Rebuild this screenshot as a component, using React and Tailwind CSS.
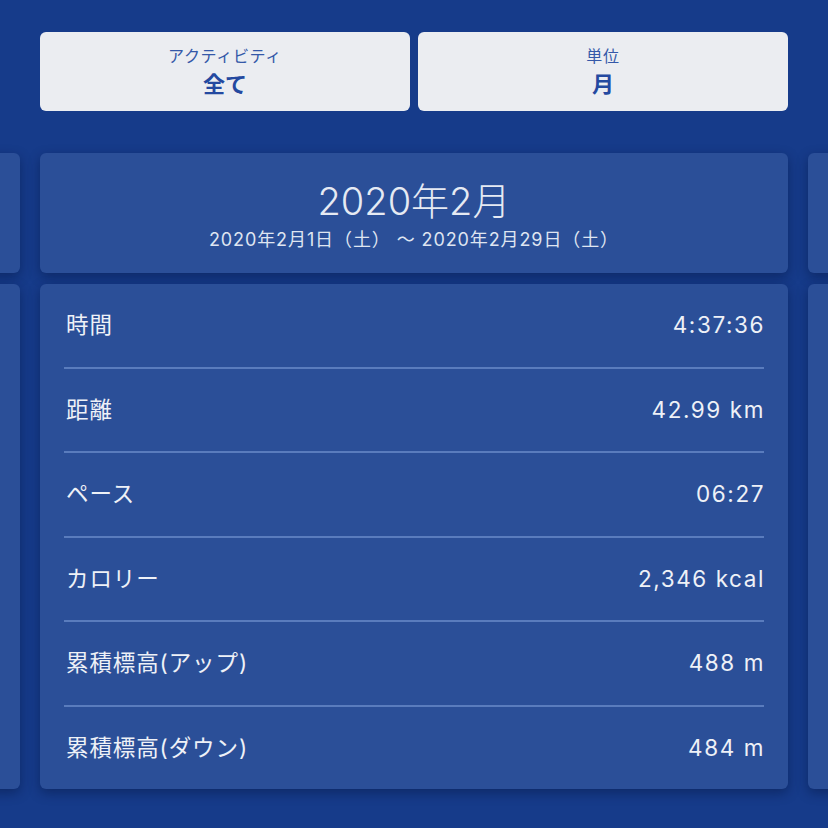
import React from 'react';

const font = { fontFamily: '"Inter", "Noto Sans CJK JP", sans-serif' };

const stats = [
  { label: '時間', value: '4:37:36' },
  { label: '距離', value: '42.99 km' },
  { label: 'ペース', value: '06:27' },
  { label: 'カロリー', value: '2,346 kcal' },
  { label: '累積標高(アップ)', value: '488 m' },
  { label: '累積標高(ダウン)', value: '484 m' },
];

function Selector({ label, value }) {
  return (
    <button className="h-[79px] rounded-md bg-[#ebedf1] flex flex-col items-center justify-center">
      <span className="text-[16px] leading-5 tracking-[0.04em] text-[#3458a8]">{label}</span>
      <span className="mt-1 text-[22px] leading-7 font-bold text-[#2449a0]">{value}</span>
    </button>
  );
}

function Column({ empty }) {
  return (
    <div className="w-[748px] shrink-0 flex flex-col gap-[11px]">
      <div className="h-[120px] rounded-md bg-[#2b4f98] shadow-[0_4px_12px_rgba(5,20,60,0.45)] flex flex-col items-center justify-center">
        {!empty && (
          <>
            <div className="mt-1 text-[38px] leading-[44px] text-[#e6eaf3] font-light">2020年2月</div>
            <div className="mt-[5px] text-[18px] leading-6 tracking-[0.05em] text-[#dfe5f1]">2020年2月1日（土） 〜 2020年2月29日（土）</div>
          </>
        )}
      </div>
      <div className="h-[505px] rounded-md bg-[#2b4f98] shadow-[0_4px_12px_rgba(5,20,60,0.45)] px-6 flex flex-col">
        {!empty &&
          stats.map((s, i) => (
            <div
              key={s.label}
              className={`flex-1 flex items-center justify-between text-[22.5px] tracking-[0.04em] text-[#eef1f7] ${i < stats.length - 1 ? 'border-b-2 border-[#5a7cbd]' : ''}`}
            >
              <span className="pl-[2px]">{s.label}</span>
              <span className="tracking-[0.07em] mr-[-1px]">{s.value}</span>
            </div>
          ))}
      </div>
    </div>
  );
}

export default function App() {
  return (
    <div className="w-[828px] h-[828px] bg-[#163b8a] overflow-hidden" style={font}>
      <div className="px-10 pt-8 grid grid-cols-2 gap-2">
        <Selector label="アクティビティ" value="全て" />
        <Selector label="単位" value="月" />
      </div>
      <div className="mt-[42px] flex justify-center gap-5 pb-6">
        <Column empty />
        <Column />
        <Column empty />
      </div>
    </div>
  );
}
